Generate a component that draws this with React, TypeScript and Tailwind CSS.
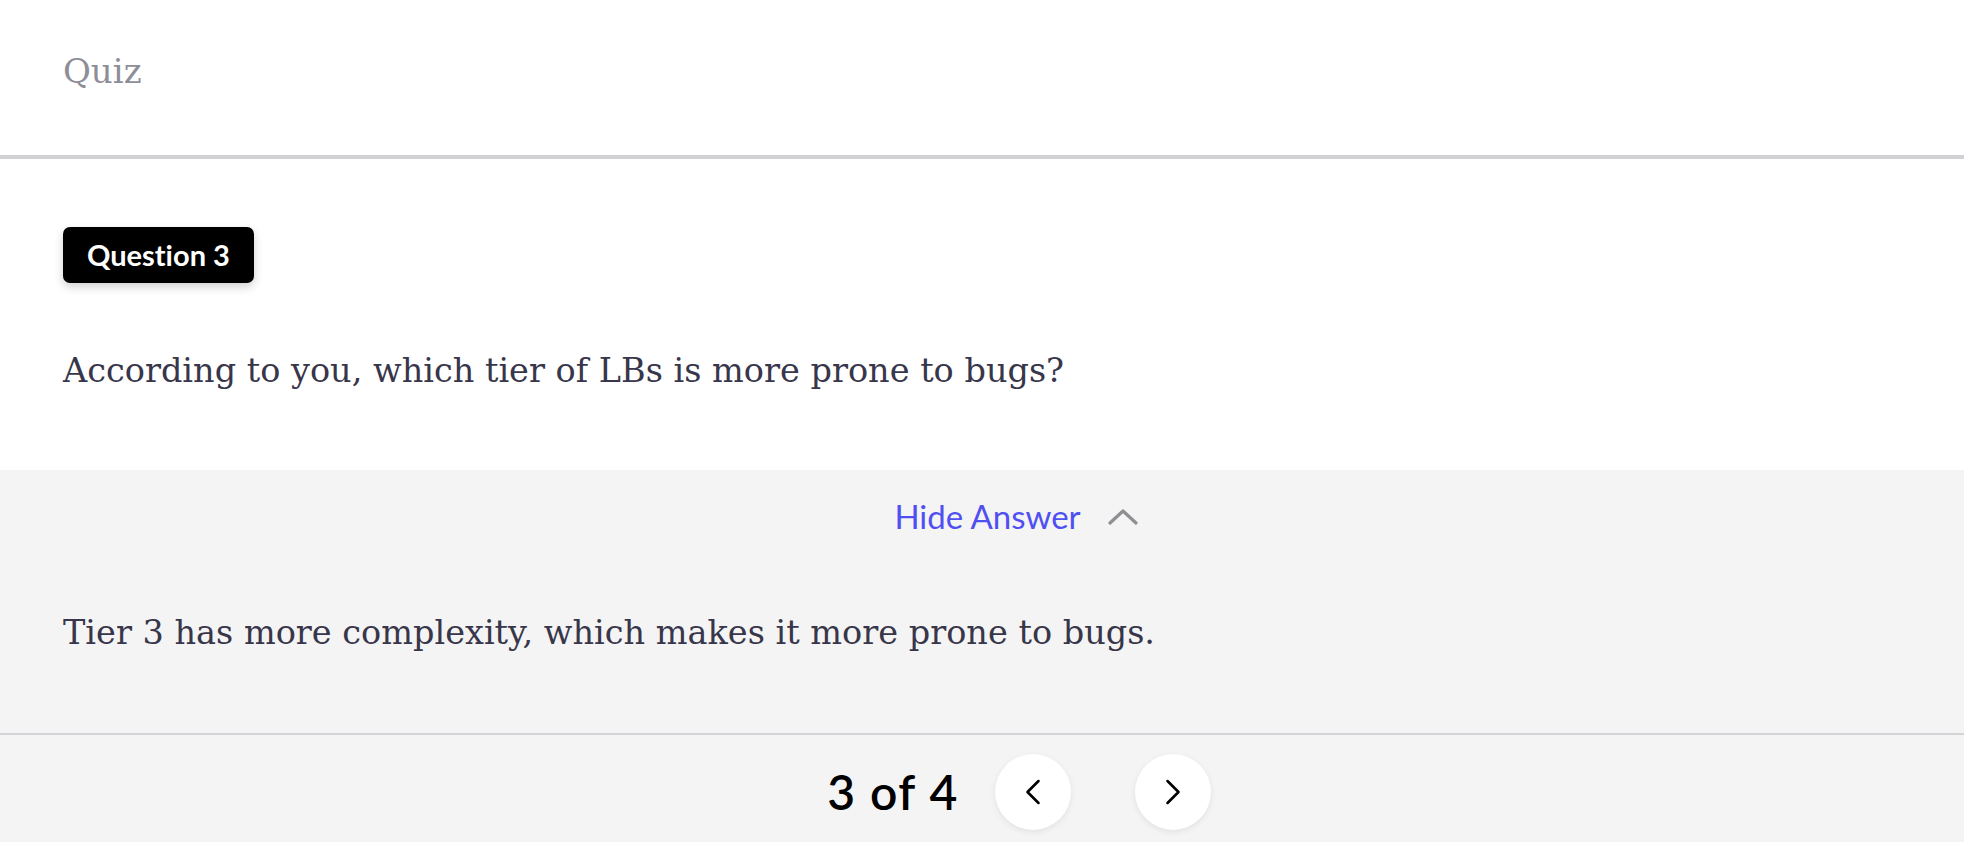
import { ChevronLeft, ChevronRight } from "lucide-react";

const serif = "font-['DejaVu_Serif',serif]";
const sans = "font-['Lato','Open_Sans',sans-serif] [font-variant-ligatures:none]";

const App = () => {
  return (
    <div className="min-h-screen bg-[#f4f4f4] flex flex-col">
      {/* Header */}
      <header className="bg-white h-[159px] pt-[50px] px-[63px] border-b-4 border-[#d2d2d6]">
        <h1 className={`${serif} text-[34px] leading-[42px] text-[#8e8e98]`}>Quiz</h1>
      </header>

      {/* Question */}
      <section className="bg-white px-[63px] pt-[68px] pb-[79px]">
        <span
          className={`${sans} inline-flex items-center h-[56px] px-[24px] rounded-[7px] bg-black text-white text-[29px] font-bold shadow-[0_4px_10px_rgba(0,0,0,0.18)]`}
        >
          Question 3
        </span>
        <p className={`${serif} mt-[67px] text-[33.5px] leading-[41px] text-[#38364a]`}>
          According to you, which tier of LBs is more prone to bugs?
        </p>
      </section>

      {/* Answer */}
      <section className="bg-[#f4f4f4] pt-[28px] pb-[80px] border-b-2 border-[#d4d4d8]">
        <button className="flex items-center justify-center gap-[27px] w-full pl-[68px]">
          <span className={`${sans} text-[33px] leading-[36px] text-[#5050f0]`}>Hide Answer</span>
          <svg width="30" height="17" viewBox="0 0 30 17" fill="none">
            <path d="M2 15 L15 3 L28 15" stroke="#8e8e93" strokeWidth="3.2" strokeLinecap="round" strokeLinejoin="round" />
          </svg>
        </button>
        <p className={`${serif} px-[63px] mt-[78px] text-[33.5px] leading-[41px] text-[#38364a]`}>
          Tier 3 has more complexity, which makes it more prone to bugs.
        </p>
      </section>

      {/* Pager */}
      <footer className="flex-1 bg-[#f4f4f4] pt-[19px] pb-[20px] pl-[74px] flex justify-center">
        <div className="flex items-center h-[76px]">
          <span className={`${sans} text-[48px] font-semibold tracking-[1.5px] text-black leading-none`}>3 of 4</span>
          <button className="ml-[36px] w-[76px] h-[76px] rounded-full bg-white shadow-[0_2px_6px_rgba(0,0,0,0.08)] flex items-center justify-center">
            <ChevronLeft size={44} strokeWidth={1.4} className="text-black" />
          </button>
          <button className="ml-[64px] w-[76px] h-[76px] rounded-full bg-white shadow-[0_2px_6px_rgba(0,0,0,0.08)] flex items-center justify-center">
            <ChevronRight size={44} strokeWidth={1.4} className="text-black" />
          </button>
        </div>
      </footer>
    </div>
  );
};

export default App;
